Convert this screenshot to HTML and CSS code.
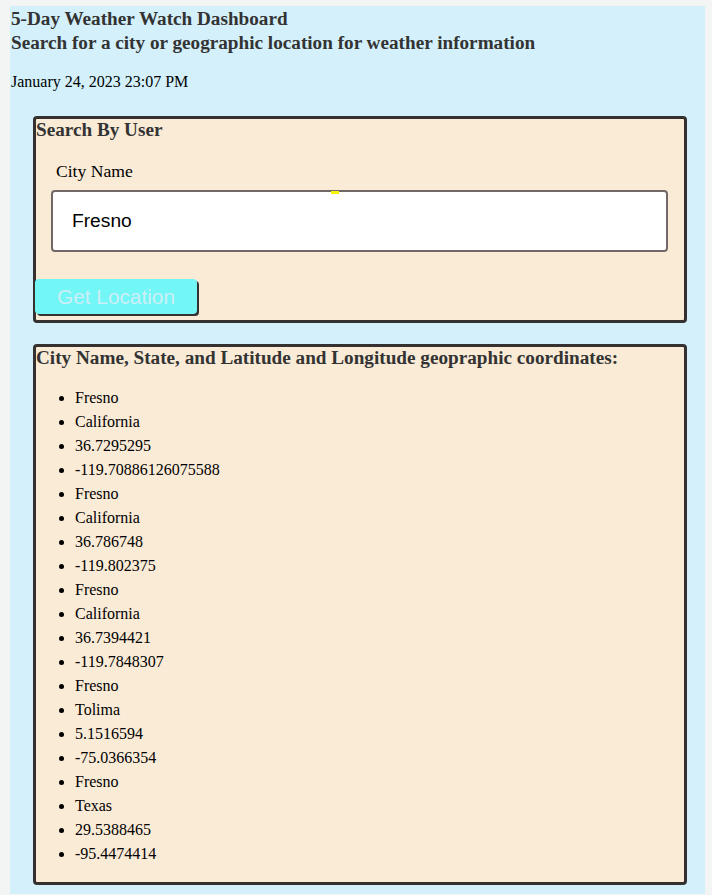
FILE: index.html
```html
<!DOCTYPE html>
<html lang="en">
<head>
<meta charset="utf-8">
<title>5-Day Weather Watch Dashboard</title>
<link rel="stylesheet" href="styles.css">
</head>
<body>
<div class="page">
  <header class="header">
    <h1 class="title">5-Day Weather Watch Dashboard</h1>
    <h2 class="subtitle">Search for a city or geographic location for weather information</h2>
    <p class="date">January 24, 2023 23:07 PM</p>
  </header>

  <section class="card search-card">
    <h3 class="card-title">Search By User</h3>
    <label class="field-label" for="city">City Name</label>
    <div class="input-wrap">
      <input id="city" class="city-input" type="text" value="Fresno">
      <span class="marker"></span>
    </div>
    <button class="btn" type="button">Get Location</button>
  </section>

  <section class="card results-card">
    <h3 class="card-title">City Name, State, and Latitude and Longitude geopraphic coordinates:</h3>
    <ul class="results">
      <li>Fresno</li>
      <li>California</li>
      <li>36.7295295</li>
      <li>-119.70886126075588</li>
      <li>Fresno</li>
      <li>California</li>
      <li>36.786748</li>
      <li>-119.802375</li>
      <li>Fresno</li>
      <li>California</li>
      <li>36.7394421</li>
      <li>-119.7848307</li>
      <li>Fresno</li>
      <li>Tolima</li>
      <li>5.1516594</li>
      <li>-75.0366354</li>
      <li>Fresno</li>
      <li>Texas</li>
      <li>29.5388465</li>
      <li>-95.4474414</li>
    </ul>
  </section>
</div>
</body>
</html>
```

FILE: styles.css
```css
html {
  background: #f3f4f4;
}
body {
  margin: 6px 7px 0 10px;
  font-family: "Liberation Serif", "Times New Roman", serif;
  color: #000;
}
.page {
  background: #d3f0fb;
  padding: 1px 0 9px 1px;
  display: flow-root;
}
.header {
  color: #333;
}
.title,
.subtitle {
  margin: 0;
  font-size: 19.2px;
  line-height: 24px;
  font-weight: bold;
}
.date {
  margin: 18px 0 0;
  font-size: 16px;
  line-height: 18px;
  color: #000;
}
.card {
  background: #faebd7;
  border: 3px solid #363131;
  border-radius: 4px;
  margin: 0 18px 0 22px;
}
.search-card {
  margin-top: 25px;
  padding-bottom: 6px;
}
.results-card {
  margin-top: 21px;
  padding-bottom: 16px;
}
.card-title {
  margin: 0;
  font-size: 19.2px;
  line-height: 22px;
  font-weight: bold;
  color: #333;
}
.field-label {
  display: block;
  margin: 21px 0 0 20px;
  font-size: 17.6px;
  line-height: 18px;
}
.input-wrap {
  position: relative;
  margin: 10px 16px 0 15px;
}
.city-input {
  display: block;
  box-sizing: border-box;
  width: 100%;
  height: 62px;
  border: 2px solid #706967;
  border-radius: 4px;
  background: #fff;
  padding: 0 19px;
  font-family: "Liberation Sans", Arial, sans-serif;
  font-size: 19.2px;
  color: #000;
  outline: none;
}
.marker {
  position: absolute;
  left: 280px;
  top: 1px;
  width: 8px;
  height: 3px;
  background: #f5f500;
}
.btn {
  display: block;
  margin: 27px 0 0 -1px;
  width: 162px;
  height: 35px;
  border: none;
  border-radius: 4px;
  background: #72f6f6;
  color: #cdeff6;
  font-family: "Liberation Sans", Arial, sans-serif;
  font-size: 20.8px;
  padding: 0;
  box-shadow: 2px 2px 0 #363131;
}
.results {
  margin: 17px 0 0;
  padding-left: 39px;
  font-size: 16px;
  line-height: 24px;
}
```
